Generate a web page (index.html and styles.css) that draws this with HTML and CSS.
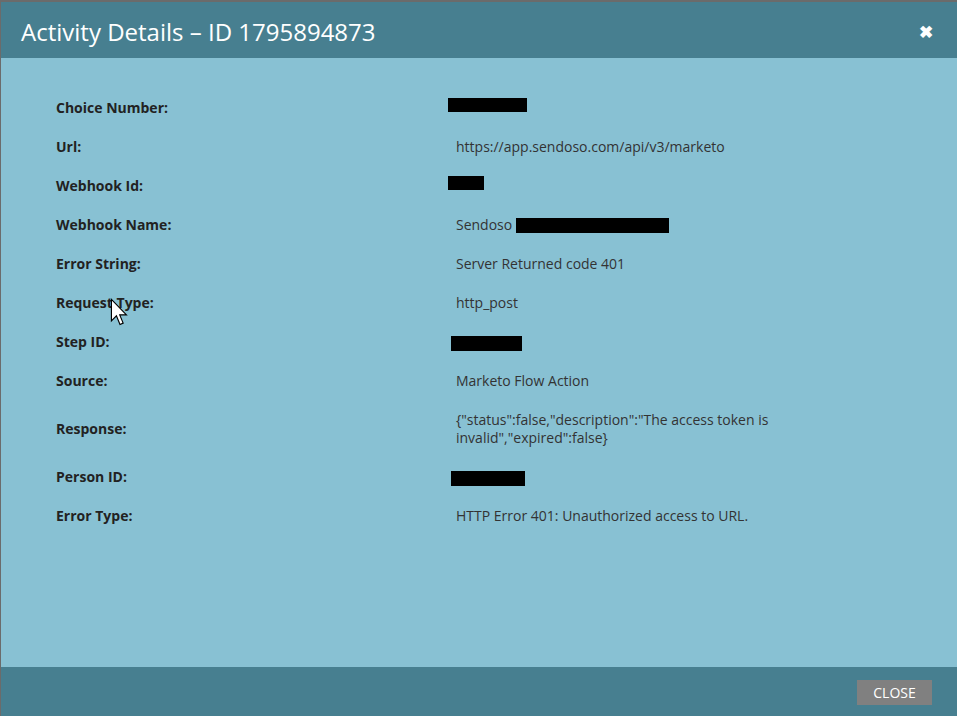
FILE: index.html
```html
<!DOCTYPE html>
<html lang="en">
<head>
  <meta charset="UTF-8" />
  <title>Activity Details</title>
  <link rel="stylesheet" href="styles.css">
</head>
<body>
  <div class="dialog">
    <header class="dialog-header">
      <h1>Activity Details &ndash; ID 1795894873</h1>
      <span class="close-x">&#10006;</span>
    </header>

    <main class="dialog-body">
      <div class="row"><div class="label">Choice Number:</div><div class="value"><span class="redact r-choice"></span></div></div>
      <div class="row"><div class="label">Url:</div><div class="value">https://app.sendoso.com/api/v3/marketo</div></div>
      <div class="row"><div class="label">Webhook Id:</div><div class="value"><span class="redact r-hook"></span></div></div>
      <div class="row"><div class="label">Webhook Name:</div><div class="value">Sendoso <span class="redact r-name"></span></div></div>
      <div class="row"><div class="label">Error String:</div><div class="value">Server Returned code 401</div></div>
      <div class="row"><div class="label">Request Type:</div><div class="value">http_post</div></div>
      <div class="row"><div class="label">Step ID:</div><div class="value"><span class="redact r-step"></span></div></div>
      <div class="row"><div class="label">Source:</div><div class="value">Marketo Flow Action</div></div>
      <div class="row"><div class="label">Response:</div><div class="value wrap">{"status":false,"description":"The access token is invalid","expired":false}</div></div>
      <div class="row"><div class="label">Person ID:</div><div class="value"><span class="redact r-person"></span></div></div>
      <div class="row"><div class="label">Error Type:</div><div class="value">HTTP Error 401: Unauthorized access to URL.</div></div>
    </main>

    <footer class="dialog-footer">
      <button class="close-btn">CLOSE</button>
    </footer>

    <svg class="cursor" width="20" height="30" viewBox="0 0 14 21">
      <path d="M1 1 L1 16 L4.5 12.5 L7 18.5 L9.2 17.6 L6.8 11.8 L11.5 11.8 Z" fill="#fff" stroke="#000" stroke-width="0.8"/>
    </svg>
  </div>
</body>
</html>
```

FILE: styles.css
```css
html, body {
  margin: 0;
  padding: 0;
  height: 100%;
}
body {
  font-family: "Open Sans", Arial, sans-serif;
  background-color: #6b6b6b;
}
.dialog {
  position: relative;
  display: flex;
  flex-direction: column;
  height: 714px;
  margin: 2px 0 0 1px;
  background-color: #88c1d3;
}
.dialog-header {
  display: flex;
  align-items: center;
  justify-content: space-between;
  height: 56px;
  padding: 2px 24px 0 20px;
  box-sizing: border-box;
  background-color: #477f90;
  color: white;
}
.dialog-header h1 {
  margin: 0;
  font-size: 24px;
  font-weight: normal;
}
.close-x {
  font-size: 17px;
  font-weight: bold;
}
.dialog-body {
  flex-grow: 1;
  padding: 31px 0 0 55px;
}
.row {
  display: flex;
  align-items: center;
  padding: 10px 0 11px;
  font-size: 14px;
  line-height: 18px;
}
.label {
  width: 400px;
  flex-shrink: 0;
  font-weight: bold;
  color: #222;
}
.value {
  color: #333;
}
.value.wrap {
  max-width: 330px;
}
.redact {
  display: inline-block;
  background-color: #000;
  vertical-align: middle;
}
.r-choice { width: 79px; height: 14px; margin-left: -8px; position: relative; top: -4px; }
.r-hook { width: 36px; height: 14px; margin-left: -8px; position: relative; top: -4px; }
.r-name { width: 153px; height: 15px; position: relative; top: -1px; }
.r-step { width: 71px; height: 15px; margin-left: -5px; }
.r-person { width: 74px; height: 15px; margin-left: -5px; }
.dialog-footer {
  display: flex;
  justify-content: flex-end;
  align-items: center;
  height: 49px;
  padding-right: 25px;
  background-color: #477f90;
}
.close-btn {
  width: 75px;
  height: 25px;
  margin-top: 2px;
  border: none;
  background-color: #808080;
  color: white;
  font-family: "Open Sans", Arial, sans-serif;
  font-size: 14px;
}
.cursor {
  position: absolute;
  left: 109px;
  top: 296px;
}
```
